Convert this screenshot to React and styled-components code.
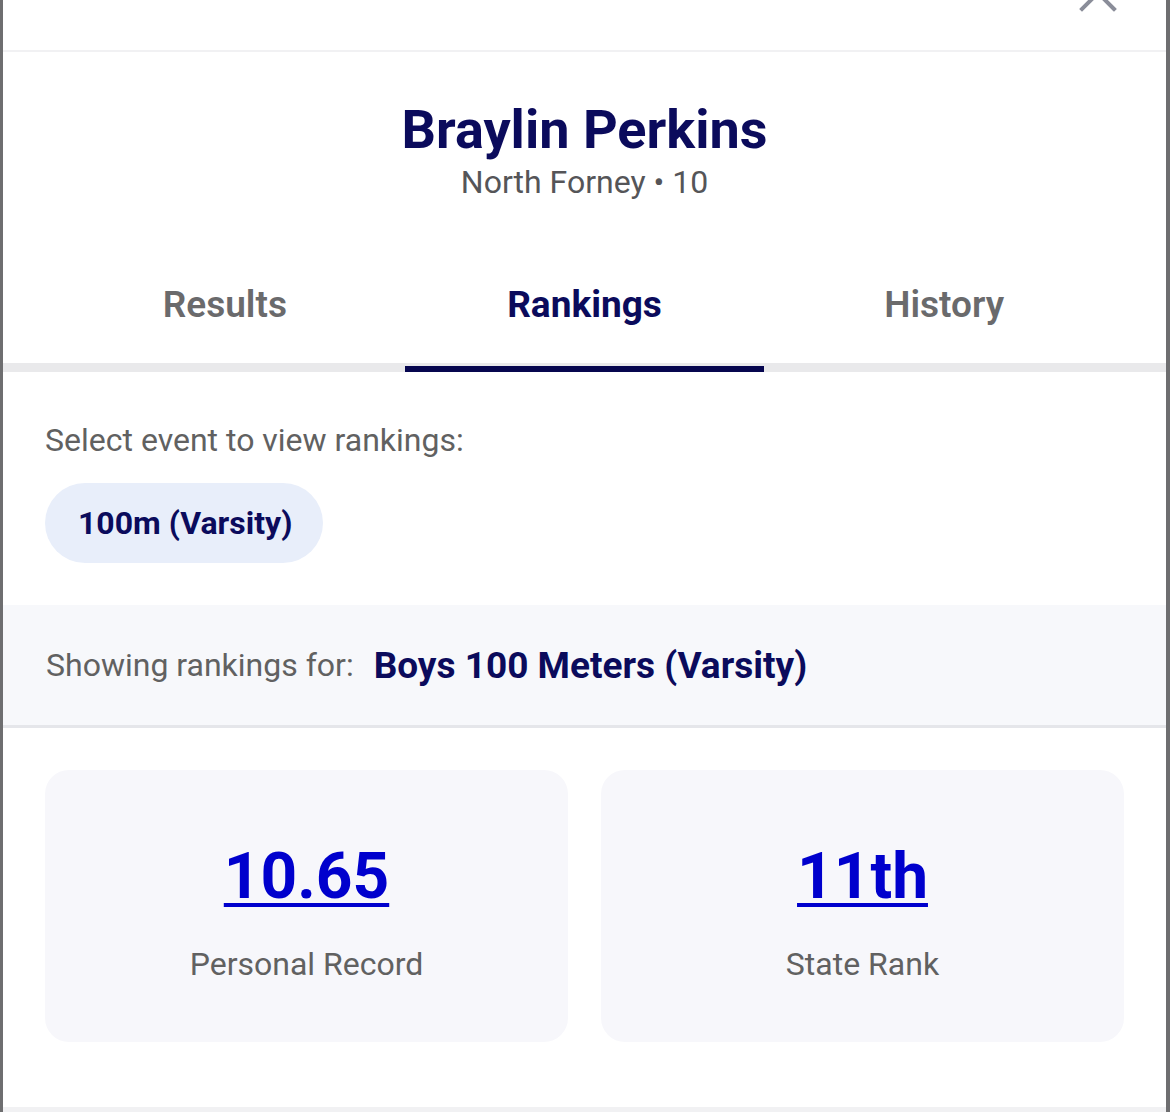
import React, { useState } from "react";
import styled, { createGlobalStyle } from "styled-components";

const GlobalStyle = createGlobalStyle`
  html, body {
    margin: 0;
    padding: 0;
    background: #ffffff;
  }
  body {
    font-family: Roboto, "Noto Sans", "Liberation Sans", sans-serif;
    -webkit-font-smoothing: antialiased;
  }
`;

const NAVY = "#0b0b5c";
const GREY_TEXT = "#616161";

const Sheet = styled.div`
  position: relative;
  width: 1170px;
  height: 1112px;
  box-sizing: border-box;
  overflow: hidden;
  background: #ffffff;
  border-left: 3px solid #6e6e70;
  border-right: 4px solid #6e6e70;
  display: flex;
  flex-direction: column;

  /* strips of the navy page header showing at the sheet's edges */
  &::before,
  &::after {
    content: "";
    position: absolute;
    top: 214px;
    width: 3px;
    height: 8px;
    background: #14143a;
    z-index: 2;
  }
  &::before {
    left: -3px;
  }
  &::after {
    right: -4px;
  }
`;

const TopBar = styled.div`
  position: relative;
  height: 50px;
  flex: none;
  border-bottom: 2px solid #f1f1f3;
`;

const CloseButton = styled.button`
  position: absolute;
  left: 1075px;
  top: -27px;
  width: 40px;
  height: 40px;
  padding: 0;
  border: none;
  background: transparent;
  color: #8a8d99;
  cursor: pointer;
  svg {
    display: block;
  }
`;

const Header = styled.header`
  padding: 46px 0 44px;
  text-align: center;
`;

const Name = styled.h1`
  margin: 0;
  font-size: 54px;
  line-height: 64px;
  font-weight: 700;
  color: ${NAVY};
`;

const Meta = styled.div`
  font-size: 32px;
  line-height: 38px;
  color: #555558;
  margin-top: 1px;
`;

const TabBar = styled.nav`
  border-bottom: 9px solid #e9e9eb;
  padding: 0 42px;
  display: grid;
  grid-template-columns: repeat(3, 1fr);
`;

const Tab = styled.button`
  position: relative;
  height: 118px;
  border: none;
  background: transparent;
  padding: 0;
  font-family: inherit;
  font-size: 37px;
  font-weight: ${(p) => (p.$active ? 700 : 600)};
  color: ${(p) => (p.$active ? NAVY : "#6a6a6c")};
  cursor: pointer;

  &::after {
    content: "";
    position: absolute;
    left: 0;
    right: 0;
    bottom: -9px;
    height: 6px;
    background: ${(p) => (p.$active ? "#06064f" : "transparent")};
  }
`;

const Picker = styled.section`
  padding: 49px 42px 42px;
`;

const PickerLabel = styled.div`
  font-size: 32px;
  line-height: 38px;
  color: ${GREY_TEXT};
`;

const ChipRow = styled.div`
  display: flex;
  gap: 16px;
  margin-top: 24px;
`;

const Chip = styled.button`
  height: 80px;
  padding: 0 31px 0 33px;
  border: none;
  border-radius: 40px;
  background: ${(p) => (p.$selected ? "#e8eefa" : "#f3f3f5")};
  font-family: inherit;
  font-size: 32px;
  font-weight: 700;
  color: ${NAVY};
  cursor: pointer;
`;

const ShowingBar = styled.div`
  display: flex;
  align-items: center;
  gap: 20px;
  padding: 0 43px;
  height: 120px;
  flex: none;
  background: #f7f8fb;
  border-bottom: 3px solid #e5e6ea;
`;

const ShowingLabel = styled.span`
  font-size: 32px;
  color: ${GREY_TEXT};
`;

const ShowingEvent = styled.span`
  font-size: 37px;
  font-weight: 700;
  color: ${NAVY};
`;

const Stats = styled.section`
  display: grid;
  grid-template-columns: 1fr 1fr;
  gap: 33px;
  padding: 42px 42px 0 42px;
`;

const StatCard = styled.div`
  height: 272px;
  border-radius: 24px;
  background: #f7f7fb;
  display: flex;
  flex-direction: column;
  align-items: center;
  padding-top: 69px;
  box-sizing: border-box;
`;

const StatValue = styled.a`
  font-size: 64px;
  line-height: 76px;
  font-weight: 700;
  color: #0000cd;
  text-decoration: underline;
  text-decoration-thickness: 4px;
  text-underline-offset: 5px;
  cursor: pointer;
`;

const StatLabel = styled.div`
  margin-top: 30px;
  font-size: 32px;
  line-height: 38px;
  color: ${GREY_TEXT};
`;

const Footer = styled.div`
  margin-top: auto;
  height: 5px;
  background: #f1f1f3;
`;

const CloseIcon = () => (
  <svg width="40" height="40" viewBox="0 0 40 40" fill="none">
    <path
      d="M4 4 L36 36 M36 4 L4 36"
      stroke="currentColor"
      strokeWidth="4"
      strokeLinecap="square"
    />
  </svg>
);

const tabs = ["Results", "Rankings", "History"];
const events = ["100m (Varsity)"];
const stats = [
  { value: "10.65", label: "Personal Record" },
  { value: "11th", label: "State Rank" },
];

export default function App() {
  const [tab, setTab] = useState("Rankings");
  const [event, setEvent] = useState(events[0]);

  return (
    <>
      <GlobalStyle />
      <Sheet>
        <TopBar>
          <CloseButton aria-label="Close">
            <CloseIcon />
          </CloseButton>
        </TopBar>

        <Header>
          <Name>Braylin Perkins</Name>
          <Meta>North Forney • 10</Meta>
        </Header>

        <TabBar>
          {tabs.map((t) => (
            <Tab key={t} $active={t === tab} onClick={() => setTab(t)}>
              {t}
            </Tab>
          ))}
        </TabBar>

        <Picker>
          <PickerLabel>Select event to view rankings:</PickerLabel>
          <ChipRow>
            {events.map((e) => (
              <Chip key={e} $selected={e === event} onClick={() => setEvent(e)}>
                {e}
              </Chip>
            ))}
          </ChipRow>
        </Picker>

        <ShowingBar>
          <ShowingLabel>Showing rankings for:</ShowingLabel>
          <ShowingEvent>Boys 100 Meters (Varsity)</ShowingEvent>
        </ShowingBar>

        <Stats>
          {stats.map((s) => (
            <StatCard key={s.label}>
              <StatValue>{s.value}</StatValue>
              <StatLabel>{s.label}</StatLabel>
            </StatCard>
          ))}
        </Stats>

        <Footer />
      </Sheet>
    </>
  );
}
